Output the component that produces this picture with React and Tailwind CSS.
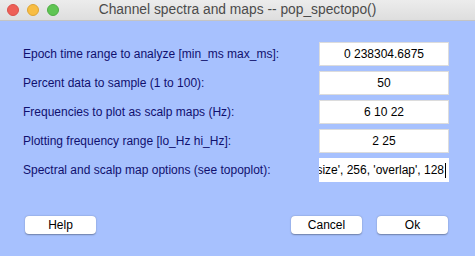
import React from 'react';

const fields = [
  { label: 'Epoch time range to analyze [min_ms max_ms]:', value: '0 238304.6875' },
  { label: 'Percent data to sample (1 to 100):', value: '50' },
  { label: 'Frequencies to plot as scalp maps (Hz):', value: '6 10 22' },
  { label: 'Plotting frequency range [lo_Hz hi_Hz]:', value: '2 25' },
];

function Btn({ children }) {
  return (
    <button className="w-[71px] h-[18px] rounded-[4px] bg-white text-[12px] leading-none text-black shadow-[0_0.5px_1.5px_rgba(0,0,0,0.35)] flex items-center justify-center">
      {children}
    </button>
  );
}

export default function App() {
  return (
    <div className="w-[475px] h-[256px] flex flex-col bg-[#a7c1fe] overflow-hidden" style={{ fontFamily: '"Liberation Sans", Arial, sans-serif' }}>
      {/* title bar */}
      <div className="relative h-[21px] shrink-0 bg-gradient-to-b from-[#ececec] to-[#dedede] border-b border-[#c4c4c4] flex items-center justify-center">
        <div className="absolute left-[7px] top-[4px] flex gap-[8px]">
          <span className="w-[12px] h-[12px] rounded-full bg-[#ee5f57] border border-[#d9524b]" />
          <span className="w-[12px] h-[12px] rounded-full bg-[#f8bd42] border border-[#dea534]" />
          <span className="w-[12px] h-[12px] rounded-full bg-[#5fc553] border border-[#4fae45]" />
        </div>
        <span className="text-[13.8px] text-[#4b4b4b]">Channel spectra and maps -- pop_spectopo()</span>
      </div>

      {/* form */}
      <div className="flex flex-col gap-[5px] pt-[21px]">
        {fields.map((f) => (
          <div key={f.label} className="flex items-center h-[24px]">
            <span className="flex-1 pl-[23px] text-[12px] text-[#10106e] whitespace-nowrap">{f.label}</span>
            <div className="w-[130px] h-[24px] mr-[26px] bg-white border border-[#dcdcdc] flex items-center justify-center text-[12px] text-black">
              {f.value}
            </div>
          </div>
        ))}
        <div className="flex items-center h-[24px]">
          <span className="flex-1 pl-[23px] text-[12px] text-[#10106e] whitespace-nowrap">Spectral and scalp map options (see topoplot):</span>
          <div className="w-[130px] h-[24px] mr-[26px] bg-white flex items-center justify-end overflow-hidden whitespace-nowrap text-[12px] text-black pr-[3px]">
            <span className="shrink-0">'winsize', 256, 'overlap', 128</span>
            <span className="shrink-0 w-px h-[15px] bg-black ml-px" />
          </div>
        </div>
      </div>

      {/* buttons */}
      <div className="flex items-center mt-[34px] pl-[25px] pr-[27px]">
        <Btn>Help</Btn>
        <div className="flex-1" />
        <Btn>Cancel</Btn>
        <div className="w-[15px]" />
        <Btn>Ok</Btn>
      </div>
    </div>
  );
}
